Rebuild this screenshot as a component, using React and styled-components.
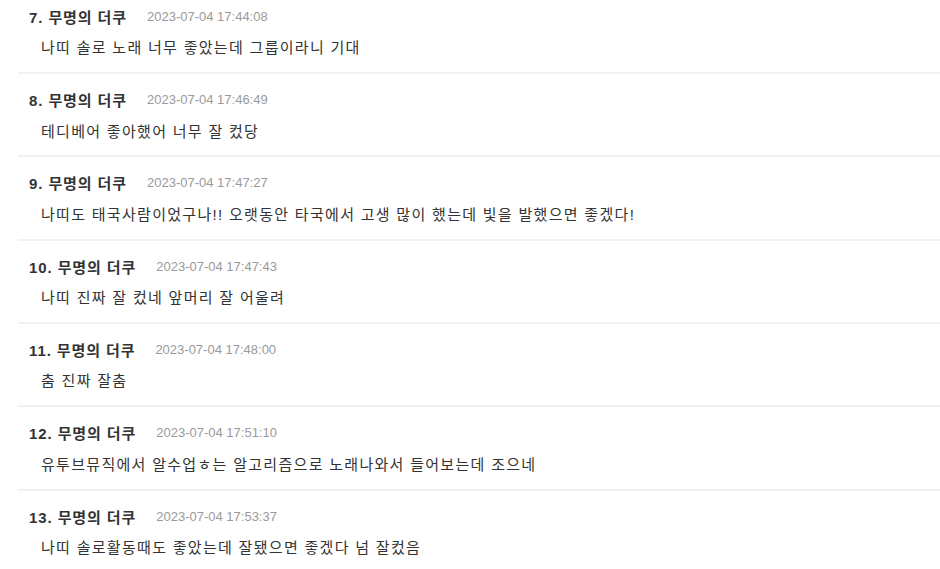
import React from 'react';
import styled, { createGlobalStyle } from 'styled-components';

const comments = [
  { no: 7, name: '무명의 더쿠', date: '2023-07-04 17:44:08', text: '나띠 솔로 노래 너무 좋았는데 그룹이라니 기대' },
  { no: 8, name: '무명의 더쿠', date: '2023-07-04 17:46:49', text: '테디베어 좋아했어 너무 잘 컸당' },
  { no: 9, name: '무명의 더쿠', date: '2023-07-04 17:47:27', text: '나띠도 태국사람이었구나!! 오랫동안 타국에서 고생 많이 했는데 빛을 발했으면 좋겠다!' },
  { no: 10, name: '무명의 더쿠', date: '2023-07-04 17:47:43', text: '나띠 진짜 잘 컸네 앞머리 잘 어울려' },
  { no: 11, name: '무명의 더쿠', date: '2023-07-04 17:48:00', text: '춤 진짜 잘춤' },
  { no: 12, name: '무명의 더쿠', date: '2023-07-04 17:51:10', text: '유투브뮤직에서 알수업ㅎ는 알고리즘으로 노래나와서 들어보는데 조으네' },
  { no: 13, name: '무명의 더쿠', date: '2023-07-04 17:53:37', text: '나띠 솔로활동때도 좋았는데 잘됐으면 좋겠다 넘 잘컸음' },
];

const GlobalStyle = createGlobalStyle`
  html, body {
    margin: 0;
    padding: 0;
    background: #fff;
    overflow: hidden;
  }
  body {
    font-family: "Liberation Sans", "Noto Sans CJK KR", sans-serif;
    color: #333;
  }
`;

const List = styled.ul`
  list-style: none;
  margin: -9.33px 0 0 18px;
  padding: 0;
`;

const Item = styled.li`
  padding: 15.5px 0 12.83px 0;
  border-bottom: 2px solid #f1f1f1;
`;

const Head = styled.div`
  display: flex;
  align-items: center;
  gap: 20px;
  height: 20px;
  padding-left: 11px;
`;

const Name = styled.strong`
  font-size: 15px;
  font-weight: bold;
  letter-spacing: 0.9px;
  color: #333;
`;

const Date = styled.span`
  font-size: 13px;
  color: #9a9a9a;
`;

const Text = styled.p`
  margin: 11px 0 0 0;
  padding-left: 23px;
  font-size: 15px;
  letter-spacing: 1.3px;
  line-height: 22px;
  color: #333;
`;

export default function App() {
  return (
    <>
      <GlobalStyle />
      <List>
        {comments.map((c) => (
          <Item key={c.no}>
            <Head>
              <Name>{c.no}. {c.name}</Name>
              <Date>{c.date}</Date>
            </Head>
            <Text>{c.text}</Text>
          </Item>
        ))}
      </List>
    </>
  );
}
